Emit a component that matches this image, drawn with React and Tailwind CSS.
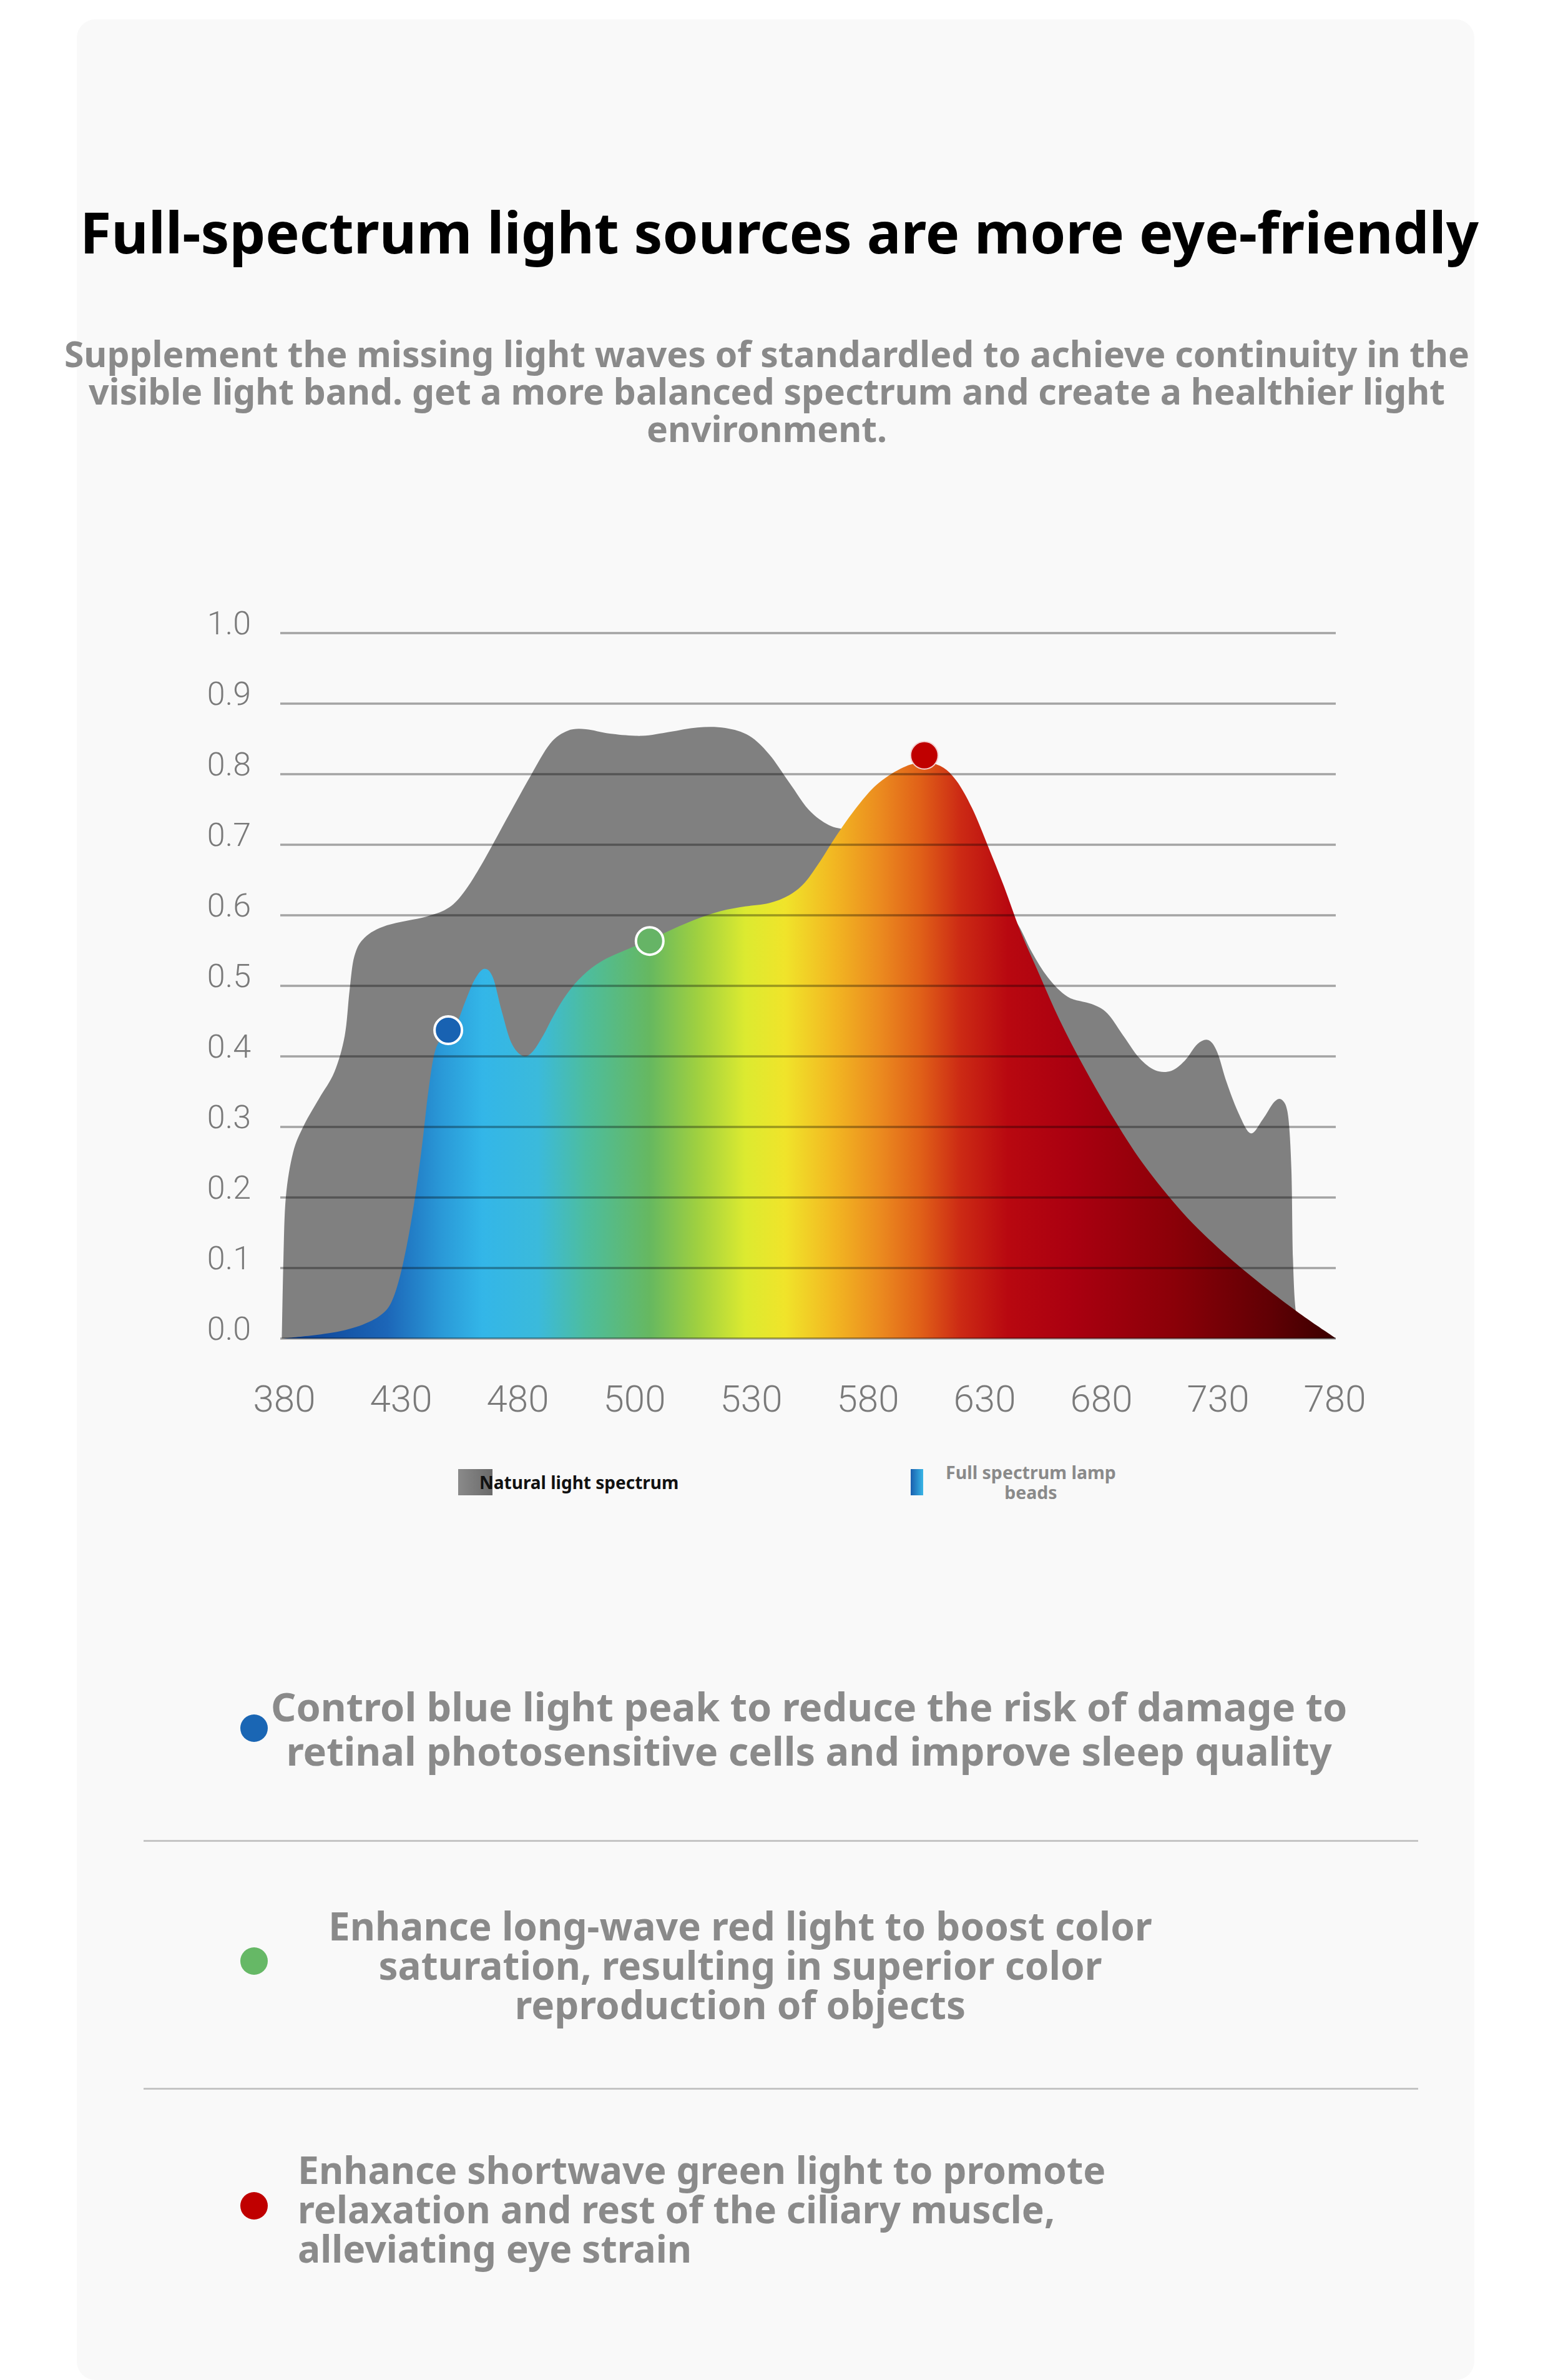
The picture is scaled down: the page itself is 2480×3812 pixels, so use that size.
import React from "react";

const T = ([zx, zy]) => [250 + zx / 0.784 - 449, 900 + zy / 1.12 - 990];

function smooth(raw) {
  const pts = raw.map(T);
  const f = (p) => `${p[0].toFixed(1)} ${p[1].toFixed(1)}`;
  let d = `M ${f(pts[0])}`;
  for (let i = 0; i < pts.length - 1; i++) {
    const p0 = pts[i - 1] || pts[i];
    const p1 = pts[i];
    const p2 = pts[i + 1];
    const p3 = pts[i + 2] || p2;
    const c1 = [p1[0] + (p2[0] - p0[0]) / 6, p1[1] + (p2[1] - p0[1]) / 6];
    const c2 = [p2[0] - (p3[0] - p1[0]) / 6, p2[1] - (p3[1] - p1[1]) / 6];
    d += ` C ${f(c1)} ${f(c2)} ${f(p2)}`;
  }
  return d + " Z";
}

const grayPts = [
  [158, 1393], [160, 1250], [163, 1140], [172, 1060], [186, 1010], [205, 962], [224, 915],
  [237, 850], [243, 770], [249, 708], [262, 674], [290, 652], [340, 636], [368, 620],
  [388, 590], [412, 535], [440, 462], [470, 385], [495, 326], [517, 303], [540, 300],
  [570, 308], [610, 312], [645, 305], [680, 297], [715, 298], [745, 312], [770, 345],
  [795, 395], [820, 445], [845, 472], [870, 482], [900, 500], [950, 540], [1000, 570],
  [1050, 600], [1080, 645], [1100, 700], [1120, 745], [1145, 780], [1175, 793], [1195, 810],
  [1215, 850], [1235, 890], [1255, 912], [1275, 913], [1292, 895], [1308, 865], [1322, 858],
  [1333, 880], [1345, 935], [1360, 990], [1375, 1025], [1390, 1000], [1405, 968], [1415, 966],
  [1422, 995], [1426, 1090], [1428, 1250], [1432, 1348], [1442, 1375], [1460, 1386], [1482, 1393],
];

const colorPts = [
  [160, 1393], [220, 1383], [260, 1368], [285, 1348], [298, 1320], [310, 1260], [322, 1170],
  [333, 1060], [342, 950], [350, 880], [360, 852], [375, 836], [388, 790], [400, 750],
  [412, 730], [423, 745], [434, 805], [446, 862], [460, 886], [472, 880], [486, 850],
  [500, 812], [516, 775], [536, 742], [560, 716], [590, 696], [620, 678], [650, 658],
  [680, 640], [710, 626], [740, 618], [770, 612], [795, 598], [815, 575], [835, 535],
  [855, 490], [880, 440], [905, 400], [935, 371], [960, 360], [985, 366], [1005, 392],
  [1025, 442], [1045, 510], [1065, 582], [1085, 660], [1110, 742], [1135, 822], [1165, 905],
  [1200, 992], [1240, 1080], [1290, 1168], [1340, 1238], [1390, 1298], [1440, 1352], [1482, 1393],
];

const stops = [
  [160, "#0b3d8f"], [290, "#1c66b8"], [360, "#2a9ad8"], [410, "#33b6e8"], [480, "#3bbadb"],
  [540, "#4dbd9e"], [620, "#66b860"], [680, "#9fd040"], [740, "#dcea30"], [790, "#f0e42a"],
  [850, "#f2b822"], [910, "#eb8a1f"], [960, "#e06018"], [1010, "#cc2a14"], [1070, "#b80810"],
  [1150, "#aa0010"], [1280, "#8a0008"], [1400, "#600004"], [1482, "#3a0000"],
];

function Chart() {
  const x1 = T([160, 0])[0];
  const x2 = T([1482, 0])[0];
  const blue = T([367, 840]);
  const green = T([620, 680]);
  const red = T([965, 347]);
  return (
    <svg width="1691" height="1160" viewBox="0 0 1691 1160" className="block">
      <defs>
        <linearGradient id="spec" gradientUnits="userSpaceOnUse" x1={x1} y1="0" x2={x2} y2="0">
          {stops.map(([zx, c]) => (
            <stop key={zx} offset={(zx - 160) / 1322} stopColor={c} />
          ))}
        </linearGradient>
      </defs>
      <path d={smooth(grayPts)} fill="#808080" />
      <path d={smooth(colorPts)} fill="url(#spec)" />
      {Array.from({ length: 11 }).map((_, i) => (
        <line key={i} x1="0" x2="1691" y1={24 + 113 * i} y2={24 + 113 * i} stroke="rgba(0,0,0,0.34)" strokeWidth="3.5" />
      ))}
      <circle cx={blue[0]} cy={blue[1]} r="22" fill="#1862b2" stroke="#ffffff" strokeWidth="4" />
      <circle cx={green[0]} cy={green[1]} r="22" fill="#66b466" stroke="#ffffff" strokeWidth="4" />
      <circle cx={red[0]} cy={red[1]} r="22" fill="#c00000" stroke="#f4d0d0" strokeWidth="2" />
    </svg>
  );
}

const yLabels = ["1.0", "0.9", "0.8", "0.7", "0.6", "0.5", "0.4", "0.3", "0.2", "0.1", "0.0"];
const xLabels = ["380", "430", "480", "500", "530", "580", "630", "680", "730", "780"];

export default function App() {
  return (
    <div className="w-[2480px] h-[3812px] bg-white pt-[31px] pl-[123px]" style={{ fontFamily: '"Noto Sans", "Open Sans", sans-serif' }}>
      <div className="w-[2239px] h-[3781px] rounded-[30px] bg-[#f9f9f9] flex flex-col">
        {/* Title */}
        <div className="mt-[286px] flex justify-center whitespace-nowrap text-[91.5px] leading-[108px] font-bold text-black pl-[12px]">
          Full-spectrum light sources are more eye-friendly
        </div>
        {/* Subtitle */}
        <div className="mt-[111px] flex justify-center whitespace-nowrap pr-[28px]">
          <p className="text-center text-[57px] leading-[60px] font-bold text-[#8a8a8a]">
            Supplement the missing light waves of standardled to achieve continuity in the
            <br />
            visible light band. get a more balanced spectrum and create a healthier light
            <br />
            environment.
          </p>
        </div>
        {/* Chart */}
        <div className="mt-[226px] flex">
          <div className="w-[279px] flex flex-col" style={{ fontFamily: "Roboto, sans-serif" }}>
            {yLabels.map((l) => (
              <div key={l} className="h-[113px] flex items-center justify-end text-[52px] font-light text-[#7a7a7a]">
                {l}
              </div>
            ))}
          </div>
          <div className="ml-[47px] mt-[48px]">
            <Chart />
          </div>
        </div>
        {/* X labels */}
        <div className="mt-[26px] pl-[239px] flex" style={{ fontFamily: "Roboto, sans-serif" }}>
          {xLabels.map((l) => (
            <div key={l} className="w-[187px] h-[60px] leading-[60px] text-center text-[60px] font-light text-[#7a7a7a]">
              {l}
            </div>
          ))}
        </div>
        {/* Legend */}
        <div className="mt-[71px] h-[64px] pl-[611px] flex items-center">
          <div className="w-[725px] flex items-center">
            <div className="w-[55px] h-[42px] bg-gradient-to-r from-[#8a8a8a] to-[#6a6a6a]" />
            <span className="-ml-[21px] text-[28px] leading-[32px] font-bold text-[#111]">Natural light spectrum</span>
          </div>
          <div className="flex items-center">
            <div className="w-[20px] h-[42px] bg-gradient-to-r from-[#1b5fae] to-[#3ab6e6]" />
            <p className="ml-[36px] text-center text-[28.5px] leading-[32px] font-bold text-[#8a8a8a]">
              Full spectrum lamp
              <br />
              beads
            </p>
          </div>
        </div>
        {/* Bullets */}
        <div className="mt-[291px] pl-[262px] flex items-center">
          <div className="w-[44px] h-[44px] rounded-full bg-[#1a66b4] shrink-0" />
          <p className="ml-[5px] text-center whitespace-nowrap text-[63px] leading-[71px] font-bold text-[#8a8a8a]">
            Control blue light peak to reduce the risk of damage to
            <br />
            retinal photosensitive cells and improve sleep quality
          </p>
        </div>
        <div className="mt-[108px] ml-[107px] w-[2042px] h-[3px] bg-[#c4c4c4]" />
        <div className="mt-[103px] pl-[262px] flex items-center">
          <div className="w-[44px] h-[44px] rounded-full bg-[#66b866] shrink-0 -mt-[14px]" />
          <p className="ml-[97px] text-center whitespace-nowrap text-[62px] leading-[63px] font-bold text-[#8a8a8a]">
            Enhance long-wave red light to boost color
            <br />
            saturation, resulting in superior color
            <br />
            reproduction of objects
          </p>
        </div>
        <div className="mt-[102px] ml-[107px] w-[2042px] h-[3px] bg-[#c4c4c4]" />
        <div className="mt-[96px] pl-[262px] flex items-center">
          <div className="w-[44px] h-[44px] rounded-full bg-[#c00000] shrink-0 -mt-[10px]" />
          <p className="ml-[48px] text-left whitespace-nowrap text-[60.5px] leading-[63px] font-bold text-[#8a8a8a]">
            Enhance shortwave green light to promote
            <br />
            relaxation and rest of the ciliary muscle,
            <br />
            alleviating eye strain
          </p>
        </div>
      </div>
    </div>
  );
}
